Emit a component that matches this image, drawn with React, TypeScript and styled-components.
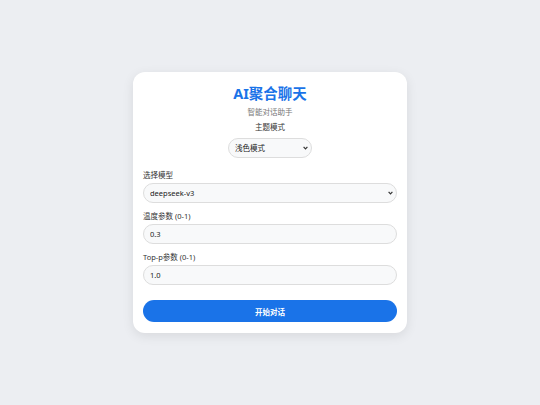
import React from 'react';
import styled, { createGlobalStyle } from 'styled-components';

const GlobalStyle = createGlobalStyle`
  * { box-sizing: border-box; }
  body {
    margin: 0;
    background: #eceef2;
    font-family: "Noto Sans", "Noto Sans CJK SC", sans-serif;
  }
`;

const Page = styled.div`
  min-height: 100vh;
  display: flex;
  align-items: center;
  justify-content: center;
`;

const Card = styled.div`
  width: 274px;
  background: #fff;
  border-radius: 12px;
  box-shadow: 0 3px 12px rgba(0, 0, 0, 0.09);
  padding: 10px 10px 11px;
  display: flex;
  flex-direction: column;
`;

const Title = styled.h1`
  margin: 0;
  text-align: center;
  font-size: 14.5px;
  line-height: 22px;
  font-weight: 700;
  color: #1a73e8;
`;

const Subtitle = styled.div`
  margin-top: 2px;
  text-align: center;
  font-size: 7.5px;
  line-height: 12px;
  color: #777;
`;

const ThemeLabel = styled.div`
  margin-top: 3px;
  text-align: center;
  font-size: 7.5px;
  line-height: 12px;
  color: #333;
`;

const ThemeRow = styled.div`
  display: flex;
  justify-content: center;
  margin: 5px 0 4px;
`;

const SelectWrap = styled.div<{ $w?: number }>`
  position: relative;
  width: ${p => (p.$w ? `${p.$w}px` : '100%')};
`;

const Select = styled.select`
  appearance: none;
  display: block;
  width: 100%;
  height: 20px;
  border: 1px solid #ddd;
  border-radius: 10px;
  background: #f8f9fa;
  font-family: inherit;
  font-size: 7.5px;
  color: #222;
  padding: 0 6px;
  outline: none;
`;

const Chevron = styled.svg`
  position: absolute;
  right: 4px;
  top: 8px;
  width: 5px;
  height: 4px;
  pointer-events: none;
`;

const Label = styled.label`
  display: block;
  font-size: 7.5px;
  line-height: 12px;
  color: #333;
  margin: 7px 0 2px;
`;

const Input = styled.input`
  display: block;
  width: 100%;
  height: 20px;
  border: 1px solid #ddd;
  border-radius: 10px;
  background: #f8f9fa;
  font-family: inherit;
  font-size: 7.5px;
  color: #222;
  padding: 0 6px;
  outline: none;
`;

const Button = styled.button`
  margin-top: 15px;
  width: 100%;
  height: 22px;
  border: none;
  border-radius: 11px;
  background: #1a73e8;
  color: #fff;
  font-family: inherit;
  font-size: 7.5px;
  font-weight: 700;
`;

const Arrow = () => (
  <Chevron viewBox="0 0 5 4">
    <path d="M0.6 0.8 L2.5 2.8 L4.4 0.8" fill="none" stroke="#333" strokeWidth="1.2" />
  </Chevron>
);

const App = () => {
  return (
    <Page>
      <GlobalStyle />
      <Card>
        <Title>AI聚合聊天</Title>
        <Subtitle>智能对话助手</Subtitle>
        <ThemeLabel>主题模式</ThemeLabel>
        <ThemeRow>
          <SelectWrap $w={84}>
            <Select defaultValue="light">
              <option value="light">浅色模式</option>
              <option value="dark">深色模式</option>
            </Select>
            <Arrow />
          </SelectWrap>
        </ThemeRow>
        <Label>选择模型</Label>
        <SelectWrap>
          <Select defaultValue="deepseek-v3">
            <option value="deepseek-v3">deepseek-v3</option>
          </Select>
          <Arrow />
        </SelectWrap>
        <Label>温度参数 (0-1)</Label>
        <Input defaultValue="0.3" />
        <Label>Top-p参数 (0-1)</Label>
        <Input defaultValue="1.0" />
        <Button>开始对话</Button>
      </Card>
    </Page>
  );
};

export default App;
